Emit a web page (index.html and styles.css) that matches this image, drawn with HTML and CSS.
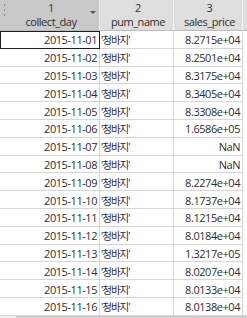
FILE: index.html
```html
<!DOCTYPE html>
<html>
<head>
<meta charset="utf-8">
<link rel="stylesheet" href="styles.css">
</head>
<body>
<div class="sheet">
  <div class="hdr sel"><span class="grip"></span><span class="num">1</span><span class="name">collect_day</span><span class="arrow"></span></div>
  <div class="hdr"><span class="num">2</span><span class="name">pum_name</span></div>
  <div class="hdr"><span class="num">3</span><span class="name">sales_price</span></div>
  <div class="hdr filler"></div>

  <div class="c date cur">2015-11-01</div><div class="c str">'청바지'</div><div class="c val">8.2715e+04</div><div class="c pad"></div>
  <div class="c date">2015-11-02</div><div class="c str">'청바지'</div><div class="c val">8.2501e+04</div><div class="c pad"></div>
  <div class="c date">2015-11-03</div><div class="c str">'청바지'</div><div class="c val">8.3175e+04</div><div class="c pad"></div>
  <div class="c date">2015-11-04</div><div class="c str">'청바지'</div><div class="c val">8.3405e+04</div><div class="c pad"></div>
  <div class="c date">2015-11-05</div><div class="c str">'청바지'</div><div class="c val">8.3308e+04</div><div class="c pad"></div>
  <div class="c date">2015-11-06</div><div class="c str">'청바지'</div><div class="c val">1.6586e+05</div><div class="c pad"></div>
  <div class="c date">2015-11-07</div><div class="c str">'청바지'</div><div class="c val">NaN</div><div class="c pad"></div>
  <div class="c date">2015-11-08</div><div class="c str">'청바지'</div><div class="c val">NaN</div><div class="c pad"></div>
  <div class="c date">2015-11-09</div><div class="c str">'청바지'</div><div class="c val">8.2274e+04</div><div class="c pad"></div>
  <div class="c date">2015-11-10</div><div class="c str">'청바지'</div><div class="c val">8.1737e+04</div><div class="c pad"></div>
  <div class="c date">2015-11-11</div><div class="c str">'청바지'</div><div class="c val">8.1215e+04</div><div class="c pad"></div>
  <div class="c date">2015-11-12</div><div class="c str">'청바지'</div><div class="c val">8.0184e+04</div><div class="c pad"></div>
  <div class="c date">2015-11-13</div><div class="c str">'청바지'</div><div class="c val">1.3217e+05</div><div class="c pad"></div>
  <div class="c date">2015-11-14</div><div class="c str">'청바지'</div><div class="c val">8.0207e+04</div><div class="c pad"></div>
  <div class="c date">2015-11-15</div><div class="c str">'청바지'</div><div class="c val">8.0133e+04</div><div class="c pad"></div>
  <div class="c date">2015-11-16</div><div class="c str">'청바지'</div><div class="c val">8.0138e+04</div><div class="c pad"></div>
</div>
<div class="hscroll"><div class="thumb"></div></div>
</body>
</html>
```
FILE: styles.css
```css
html, body {
  margin: 0;
  padding: 0;
  background: #ffffff;
  overflow: hidden;
}
body {
  width: 247px;
  height: 318px;
  font-family: "Open Sans", "Noto Sans CJK KR", sans-serif;
  font-size: 11px;
  letter-spacing: -0.45px;
  color: #2e2e2e;
}
.sheet {
  display: grid;
  grid-template-columns: 100px 74px 69px 1fr;
  grid-template-rows: 31px repeat(16, 17.8px);
}
.hdr {
  position: relative;
  box-sizing: border-box;
  background: #dedede;
  border-right: 1px solid #f2f2f2;
  border-bottom: 1px solid #bdbdbd;
  display: flex;
  flex-direction: column;
  align-items: center;
  padding-top: 1px;
  padding-left: 3px;
}
.hdr.sel {
  background: #c9c9c9;
  border-right-color: #e6e6e6;
}
.hdr.filler {
  border-right: none;
}
.num, .name {
  line-height: 14px;
  white-space: nowrap;
}
.grip {
  position: absolute;
  left: 4px;
  top: 4px;
  width: 1px;
  height: 2px;
  background: #8c8c8c;
  box-shadow: 0 5px 0 #8c8c8c, 0 10px 0 #8c8c8c;
}
.arrow {
  position: absolute;
  right: 3px;
  top: 11px;
  width: 0;
  height: 0;
  border-left: 3px solid transparent;
  border-right: 3px solid transparent;
  border-top: 3px solid #555555;
}
.c {
  box-sizing: border-box;
  border-right: 1px solid #d6d6d6;
  border-bottom: 1px solid #d6d6d6;
  display: flex;
  align-items: center;
  white-space: nowrap;
  overflow: hidden;
  padding-top: 1px;
}
.date, .val {
  justify-content: flex-end;
  padding-right: 2px;
}
.str {
  padding-left: 1px;
  font-size: 10.5px;
  letter-spacing: -1px;
}
.cur {
  outline: 1px solid #1e1e1e;
  outline-offset: -1px;
}
.pad {
  border: none;
}
.hscroll {
  height: 3px;
  margin-top: -1px;
  background: #eeeeee;
  padding-left: 16px;
}
.thumb {
  height: 100%;
  background: #cdcdcd;
}
```
